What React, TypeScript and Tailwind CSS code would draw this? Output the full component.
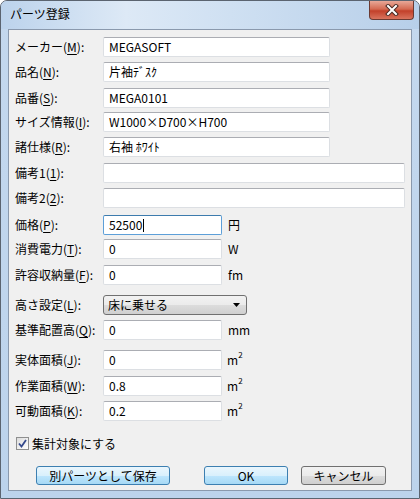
import React from "react";

const font = { fontFamily: '"Noto Sans CJK JP", "Liberation Sans", sans-serif' };

function Label({ text, k }: { text: string; k: string }) {
  return (
    <div className="w-[88px] shrink-0 text-[12px] leading-none text-black">
      {text}(<span className="underline underline-offset-2">{k}</span>):
    </div>
  );
}

function Field({
  value = "",
  w,
  focus = false,
}: {
  value?: string;
  w: string;
  focus?: boolean;
}) {
  return (
    <div
      className={
        "h-[20px] flex items-center pl-[5px] bg-white rounded-[2px] border text-[12px] leading-none text-black " +
        w +
        (focus
          ? " border-[#5d9fd8] border-t-[#3d7bad]"
          : " border-[#dcdfe3] border-t-[#abadb3]")
      }
    >
      {value}
      {focus && <span className="w-px h-[13px] bg-black ml-px" />}
    </div>
  );
}

function Row({
  mt,
  label,
  k,
  children,
}: {
  mt: string;
  label: string;
  k: string;
  children: React.ReactNode;
}) {
  return (
    <div className={"flex items-center pl-[6px] " + mt}>
      <Label text={label} k={k} />
      {children}
    </div>
  );
}

function Unit({ children }: { children: React.ReactNode }) {
  return <span className="ml-[6px] text-[12px] leading-none text-black">{children}</span>;
}

function M2() {
  return (
    <span className="ml-[5px] flex items-start text-[12px] leading-none text-black">
      <span>m</span>
      <span className="text-[8px] leading-none -mt-[3px]">2</span>
    </span>
  );
}

export default function App() {
  return (
    <div
      className="w-[420px] h-[499px] flex flex-col rounded-t-[7px] border border-[#5b6470] bg-[linear-gradient(to_bottom,#c4d8ee,#bcd3ec)]"
      style={font}
    >
      {/* Title bar */}
      <div className="h-[28px] flex items-start shrink-0 rounded-t-[6px] bg-[linear-gradient(to_right,#bcd3ec,#dde9f6_30%,#cfe0f2_55%,#b7cfe9)]">
        <div className="pl-[9px] pt-[7px] text-[12px] leading-none text-black">パーツ登録</div>
        <div className="ml-auto mr-[5px] w-[45px] h-[19px] rounded-b-[4px] border border-t-0 border-[#6b3a32] flex items-center justify-center bg-[linear-gradient(to_bottom,#e8a898,#d46a52_45%,#c2402a_55%,#d9745e)]">
          <svg width="14" height="12" viewBox="0 0 14 12">
            <path d="M3 2 L11 10 M11 2 L3 10" stroke="#4a2a24" strokeWidth="4" strokeLinecap="square" />
            <path d="M3 2 L11 10 M11 2 L3 10" stroke="#ffffff" strokeWidth="2" strokeLinecap="square" />
          </svg>
        </div>
      </div>

      {/* Client */}
      <div className="flex-1 mx-[7px] mb-[7px] border border-[#8a99ad] bg-[#f0f0f0] flex flex-col">
        <Row mt="mt-[7px]" label="メーカー" k="M">
          <Field w="w-[227px]" value="MEGASOFT" />
        </Row>
        <Row mt="mt-[5px]" label="品名" k="N">
          <Field w="w-[227px]" value="片袖ﾃﾞｽｸ" />
        </Row>
        <Row mt="mt-[6px]" label="品番" k="S">
          <Field w="w-[227px]" value="MEGA0101" />
        </Row>
        <Row mt="mt-[4px]" label="サイズ情報" k="I">
          <Field w="w-[227px]" value="W1000×D700×H700" />
        </Row>
        <Row mt="mt-[5px]" label="諸仕様" k="R">
          <Field w="w-[227px]" value="右袖 ﾎﾜｲﾄ" />
        </Row>
        <Row mt="mt-[6px]" label="備考1" k="1">
          <Field w="w-[302px]" />
        </Row>
        <Row mt="mt-[5px]" label="備考2" k="2">
          <Field w="w-[302px]" />
        </Row>
        <Row mt="mt-[7px]" label="価格" k="P">
          <Field w="w-[119px]" value="52500" focus />
          <Unit>円</Unit>
        </Row>
        <Row mt="mt-[4px]" label="消費電力" k="T">
          <Field w="w-[119px]" value="0" />
          <Unit>W</Unit>
        </Row>
        <Row mt="mt-[6px]" label="許容収納量" k="F">
          <Field w="w-[119px]" value="0" />
          <Unit>fm</Unit>
        </Row>
        <Row mt="mt-[10px]" label="高さ設定" k="L">
          <div className="w-[144px] h-[20px] flex items-center pl-[4px] pr-[6px] rounded-[3px] border border-[#707070] bg-[linear-gradient(to_bottom,#f2f2f2,#ebebeb_50%,#dddddd_50%,#cfcfcf)] text-[12px] leading-none text-black">
            <span>床に乗せる</span>
            <svg className="ml-auto" width="7" height="4" viewBox="0 0 7 4">
              <path d="M0 0 H7 L3.5 4 Z" fill="#000" />
            </svg>
          </div>
        </Row>
        <Row mt="mt-[5px]" label="基準配置高" k="Q">
          <Field w="w-[119px]" value="0" />
          <Unit>mm</Unit>
        </Row>
        <Row mt="mt-[10px]" label="実体面積" k="J">
          <Field w="w-[119px]" value="0" />
          <M2 />
        </Row>
        <Row mt="mt-[6px]" label="作業面積" k="W">
          <Field w="w-[119px]" value="0.8" />
          <M2 />
        </Row>
        <Row mt="mt-[5px]" label="可動面積" k="K">
          <Field w="w-[119px]" value="0.2" />
          <M2 />
        </Row>

        <div className="flex items-center pl-[7px] mt-[16px]">
          <div className="w-[13px] h-[13px] border border-[#8e8f8f] bg-[linear-gradient(to_bottom_right,#dcdcdc,#ffffff)] flex items-center justify-center">
            <svg width="9" height="9" viewBox="0 0 9 9">
              <path d="M1 4.5 L3.5 7.5 L8 1" stroke="#34498c" strokeWidth="1.8" fill="none" />
            </svg>
          </div>
          <span className="ml-[3px] text-[12px] leading-none text-black">集計対象にする</span>
        </div>

        <div className="flex items-center mt-[16px]">
          <div className="ml-[27px] w-[134px] h-[19px] rounded-[3px] border border-[#3c7fb1] bg-[linear-gradient(to_bottom,#eaf6fd,#d9f0fc_50%,#bee6fd_50%,#a7d9f5)] flex items-center justify-center text-[12px] leading-none text-black">
            別パーツとして保存
          </div>
          <div className="ml-[34px] w-[84px] h-[19px] rounded-[3px] border border-[#3c7fb1] bg-[linear-gradient(to_bottom,#eaf6fd,#d9f0fc_50%,#bee6fd_50%,#a7d9f5)] flex items-center justify-center text-[12px] leading-none text-black">
            OK
          </div>
          <div className="ml-[13px] w-[85px] h-[19px] rounded-[3px] border border-[#707070] bg-[linear-gradient(to_bottom,#f2f2f2,#ebebeb_50%,#dddddd_50%,#cfcfcf)] flex items-center justify-center text-[12px] leading-none text-black">
            キャンセル
          </div>
        </div>
      </div>
    </div>
  );
}
